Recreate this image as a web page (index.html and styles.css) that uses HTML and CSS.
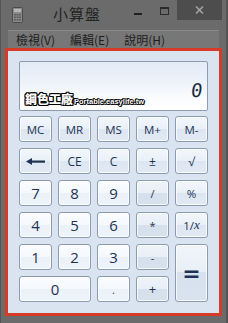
FILE: index.html
```html
<!DOCTYPE html>
<html lang="zh-Hant">
<head>
<meta charset="utf-8">
<link rel="stylesheet" href="styles.css">
</head>
<body>
<div class="window">
  <div class="titlebar">
    <svg class="appicon" width="11" height="16" viewBox="0 0 11 16">
      <rect x="0.5" y="0.5" width="10" height="15" rx="1" fill="#8a8a8a" stroke="#4a4a4a"/>
      <rect x="2" y="2" width="7" height="3" fill="#b5b5b5"/>
      <g fill="#5c5c5c">
        <rect x="2" y="7" width="2" height="1.5"/><rect x="4.5" y="7" width="2" height="1.5"/><rect x="7" y="7" width="2" height="1.5"/>
        <rect x="2" y="9.5" width="2" height="1.5"/><rect x="4.5" y="9.5" width="2" height="1.5"/><rect x="7" y="9.5" width="2" height="1.5"/>
        <rect x="2" y="12" width="2" height="1.5"/><rect x="4.5" y="12" width="2" height="1.5"/><rect x="7" y="12" width="2" height="1.5"/>
      </g>
    </svg>
    <span class="title">小算盤</span>
    <span class="minbtn"></span>
    <span class="maxbtn"></span>
    <span class="closebtn">
      <svg width="9" height="8" viewBox="0 0 9 8"><path d="M1 0.5 L8 7.5 M8 0.5 L1 7.5" stroke="#a3a3a3" stroke-width="1.6"/></svg>
    </span>
  </div>
  <div class="menubar">
    <span class="menuitem">檢視(V)</span>
    <span class="menuitem">編輯(E)</span>
    <span class="menuitem">說明(H)</span>
  </div>
  <div class="frame">
    <div class="calc">
      <div class="display">
        <span class="value">0</span>
        <span class="watermark"><b class="wm-cjk">鋼色工廠</b><span class="wm-url">Portable.easylife.tw</span></span>
      </div>
      <div class="keypad">
        <button class="key fn">MC</button>
        <button class="key fn">MR</button>
        <button class="key fn">MS</button>
        <button class="key fn">M+</button>
        <button class="key fn">M-</button>

        <button class="key fn"><svg width="19" height="7" viewBox="0 0 19 7"><path d="M0 3.5 L6 0 L6 7 Z" fill="#1e3252"/><rect x="5" y="2.5" width="14" height="2.2" fill="#1e3252"/></svg></button>
        <button class="key fn small">CE</button>
        <button class="key fn small">C</button>
        <button class="key fn small">±</button>
        <button class="key fn small">√</button>

        <button class="key num">7</button>
        <button class="key num">8</button>
        <button class="key num">9</button>
        <button class="key op light">/</button>
        <button class="key fn">%</button>

        <button class="key num">4</button>
        <button class="key num">5</button>
        <button class="key num">6</button>
        <button class="key op light">*</button>
        <button class="key fn">1/<i class="ix">x</i></button>

        <button class="key num">1</button>
        <button class="key num">2</button>
        <button class="key num">3</button>
        <button class="key op light">-</button>
        <button class="key op equals">=</button>

        <button class="key num zero">0</button>
        <button class="key num light">.</button>
        <button class="key op">+</button>
      </div>
    </div>
  </div>
</div>
</body>
</html>
```
FILE: styles.css
```css
html, body {
  margin: 0;
  padding: 0;
}
body {
  width: 228px;
  height: 323px;
  overflow: hidden;
  background: #5e5e5e;
}
.window {
  width: 228px;
  height: 323px;
  box-sizing: border-box;
  background: #6b6b6b;
  border-left: 1px solid #555;
  border-right: 2px solid #555;
}
.titlebar {
  height: 30px;
  display: flex;
  align-items: flex-start;
  position: relative;
}
.appicon {
  margin: 7px 0 0 11px;
}
.title {
  margin: 5px 0 0 30px;
  font-family: "Noto Sans CJK TC", "Noto Sans", sans-serif;
  font-size: 15px;
  line-height: 18px;
  color: #232323;
  letter-spacing: 1px;
}
.minbtn {
  width: 8px;
  height: 2px;
  background: #1f1f1f;
  margin: 13px 0 0 33px;
}
.maxbtn {
  width: 7px;
  height: 5px;
  border: 1px solid #2a2a2a;
  border-top-width: 2px;
  margin: 7px 0 0 18px;
}
.closebtn {
  width: 45px;
  height: 20px;
  background: #4d4d4d;
  margin-left: 8px;
  display: flex;
  align-items: center;
  justify-content: center;
}
.menubar {
  height: 18px;
  margin: 0 7px 0 7px;
  background: #777;
  border-top: 1px solid #8a8a8a;
  box-sizing: border-box;
  display: flex;
  align-items: center;
  font-family: "Noto Sans CJK TC", "Noto Sans", sans-serif;
  font-size: 12px;
  color: #1d1d1d;
  padding-left: 8px;
  gap: 15px;
}
.menuitem {
  line-height: 16px;
}
.frame {
  margin: 0 4px 0 4px;
  border: 3px solid #d63b28;
  height: 262px;
}
.calc {
  height: 262px;
  box-sizing: border-box;
  background: #d9e4f0;
  padding: 10px 11px 11px 11px;
}
.display {
  height: 50px;
  box-sizing: border-box;
  border: 1px solid #8e9cb1;
  border-radius: 2px;
  background: linear-gradient(#e3ebf5, #eef3f9 45%, #fbfcfe 75%, #ffffff);
  position: relative;
  margin-bottom: 5px;
}
.value {
  position: absolute;
  right: 5px;
  top: 17px;
  font-family: "DejaVu Sans Mono", monospace;
  font-size: 19px;
  line-height: 22px;
  color: #17283d;
  transform: skewX(-7deg);
}
.watermark {
  position: absolute;
  left: 5px;
  top: 30px;
  display: flex;
  align-items: baseline;
  white-space: nowrap;
}
.wm-cjk {
  font-family: "Noto Sans CJK TC", sans-serif;
  font-weight: 900;
  font-size: 12px;
  line-height: 14px;
  color: #fff;
  text-shadow: 1px 0 0 #000, -1px 0 0 #000, 0 1px 0 #000, 0 -1px 0 #000, 1px 1px 0 #000, -1px -1px 0 #000, 1px -1px 0 #000, -1px 1px 0 #000;
}
.wm-url {
  font-family: "Liberation Sans", sans-serif;
  font-weight: bold;
  font-size: 7.5px;
  line-height: 10px;
  color: #fff;
  margin-left: 1px;
  text-shadow: 1px 0 0 #000, -1px 0 0 #000, 0 1px 0 #000, 0 -1px 0 #000, 1px 1px 0 #000, -1px -1px 0 #000;
}
.keypad {
  display: grid;
  grid-template-columns: repeat(5, 1fr);
  grid-auto-rows: 26px;
  gap: 6px;
}
.key {
  margin: 0;
  padding: 0;
  border: 1px solid #8c9bb1;
  border-radius: 3px;
  box-shadow: inset 0 0 0 1px rgba(255, 255, 255, 0.75);
  font-family: "Open Sans", "Noto Sans", sans-serif;
  color: #1e3252;
  display: flex;
  align-items: center;
  justify-content: center;
  font-size: 11.5px;
}
.fn {
  background: linear-gradient(#f3f7fc, #e9f0f8 50%, #dce6f2 50%, #e1e9f4);
}
.num {
  background: linear-gradient(#fbfdff, #f4f8fc 50%, #ebf1f9 50%, #eff4fa);
  font-size: 15px;
}
.op {
  background: linear-gradient(#eef3f9, #e8eff7 50%, #d6e0ec 50%, #d8e2ee);
  font-size: 13px;
}
.small {
  font-size: 12px;
}
.light {
  font-size: 11px;
}
.ix {
  font-family: "Liberation Serif", serif;
  font-size: 13px;
}
.zero {
  grid-column: span 2;
}
.equals {
  grid-row: span 2;
  font-size: 22px;
  font-weight: bold;
  font-family: "DejaVu Sans", sans-serif;
  background: linear-gradient(#f1f5fa, #e9eff7 48%, #d8e2ee 48%, #d9e3ef);
}
```
